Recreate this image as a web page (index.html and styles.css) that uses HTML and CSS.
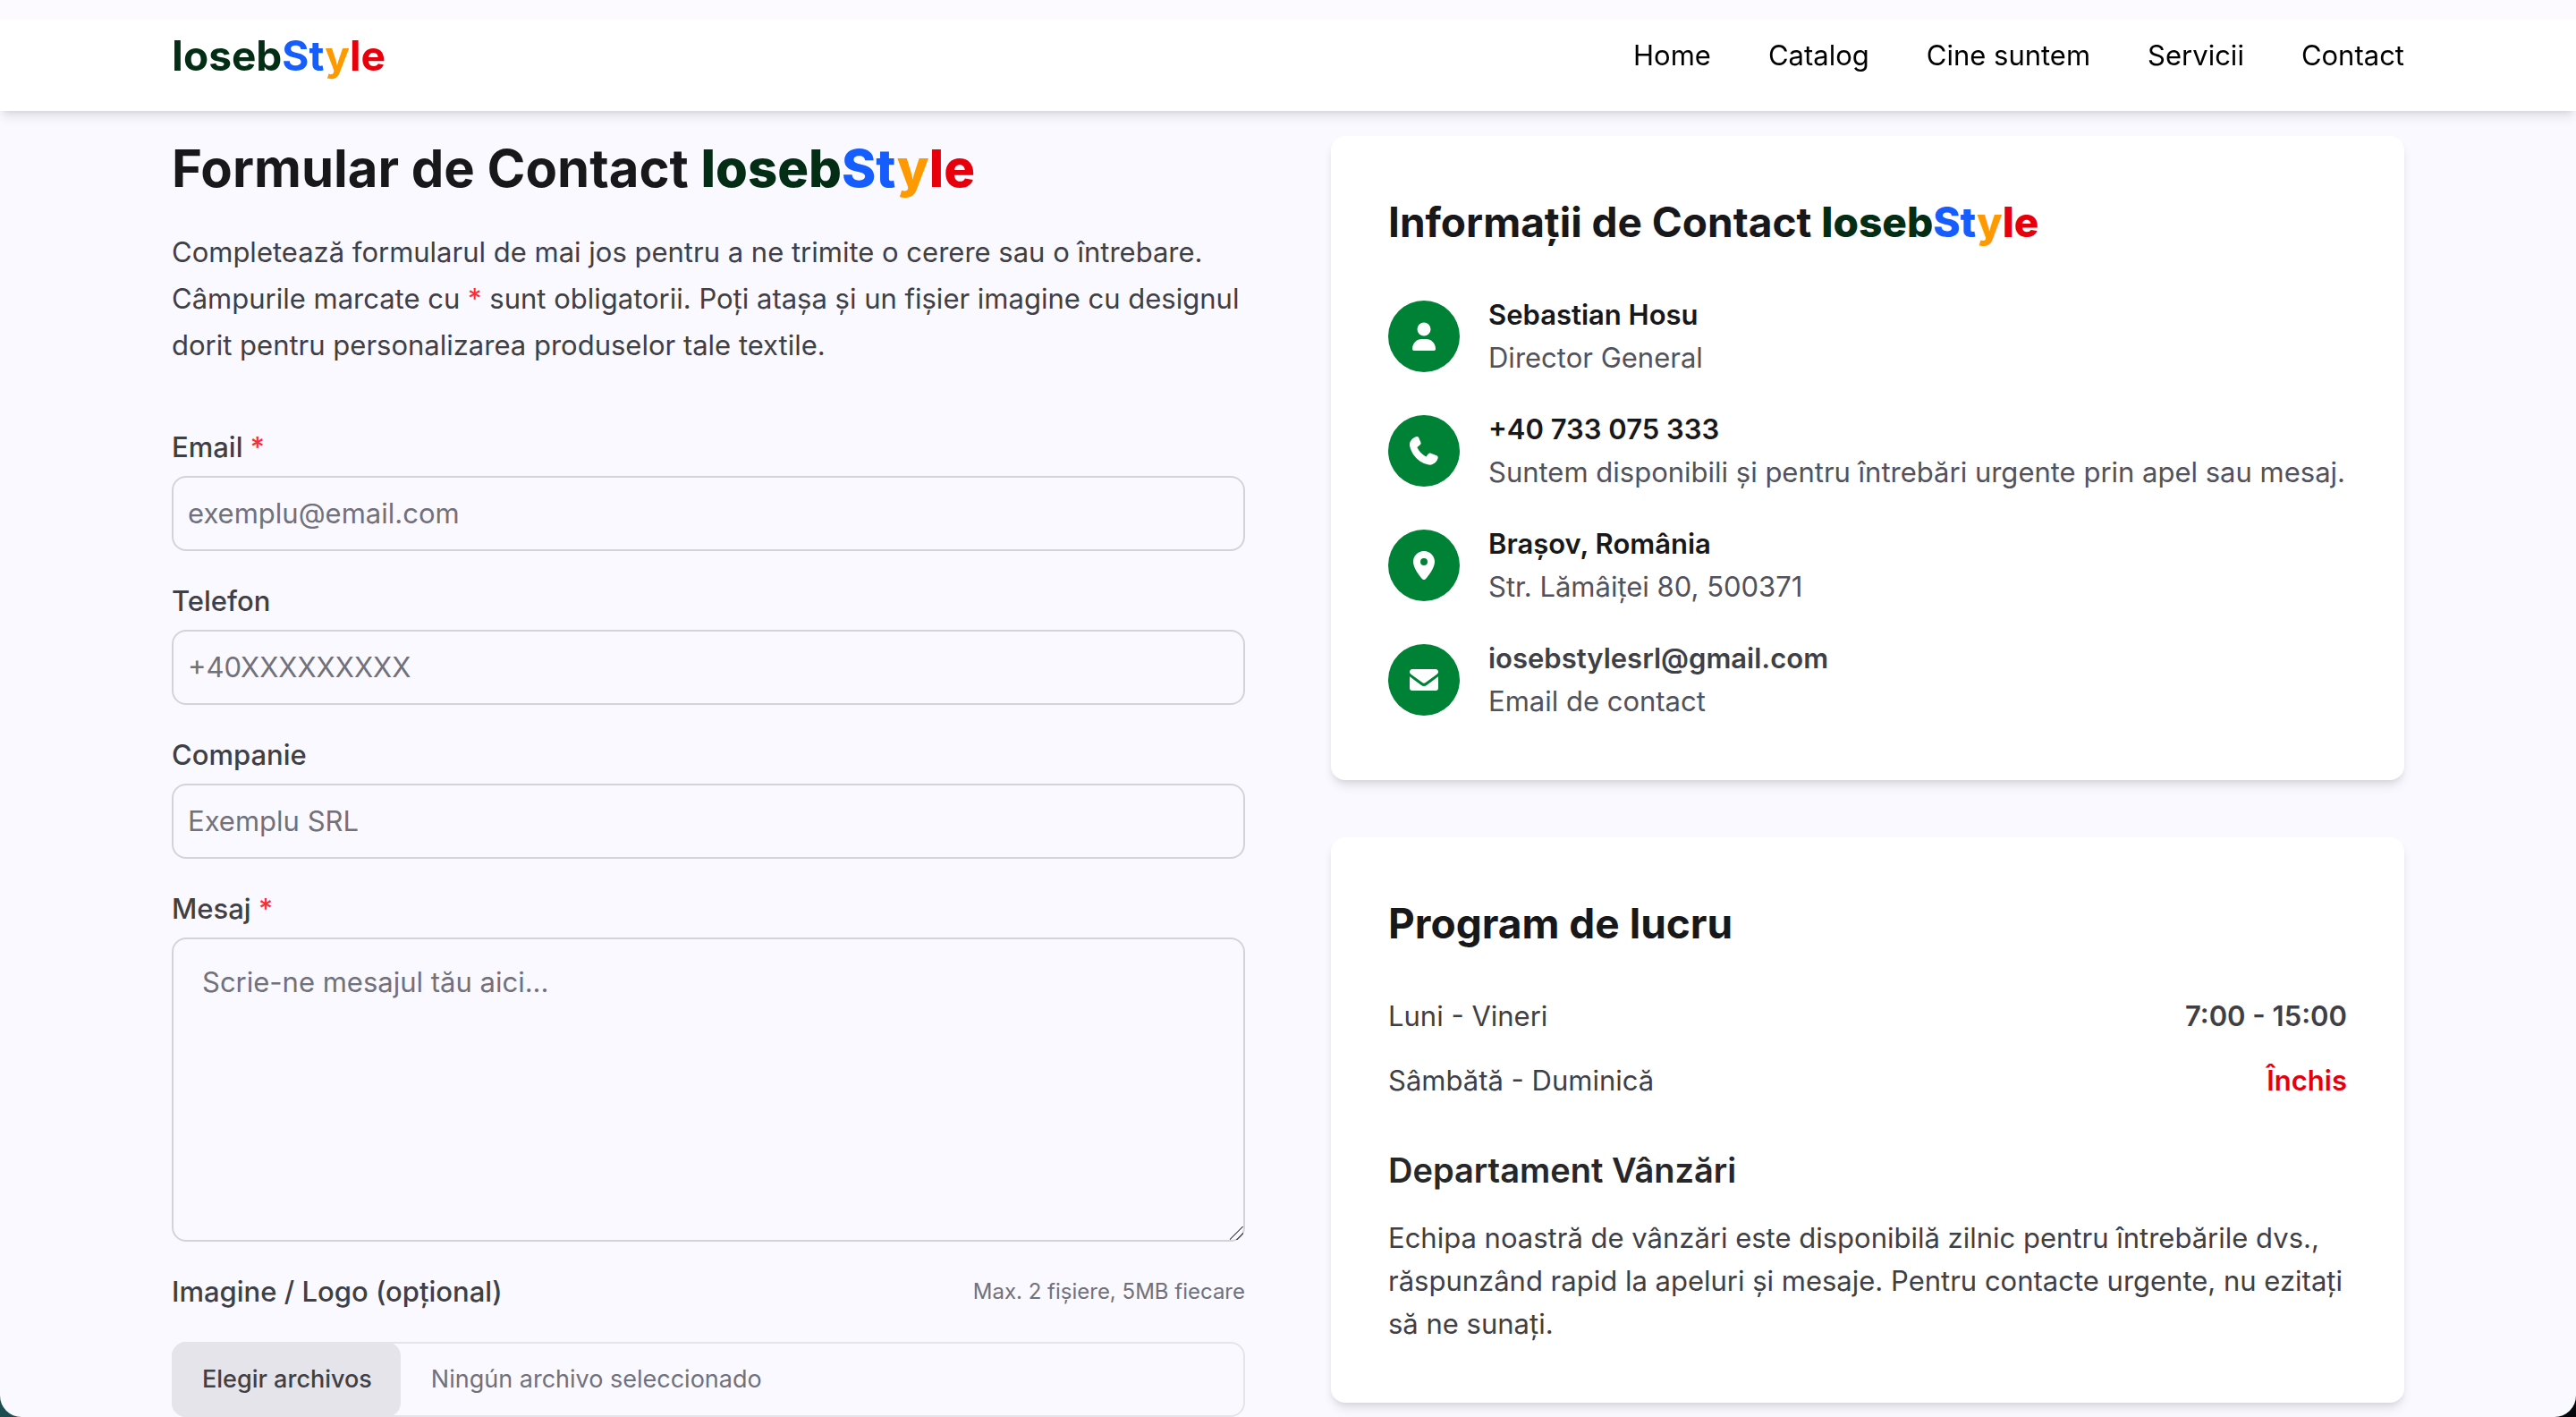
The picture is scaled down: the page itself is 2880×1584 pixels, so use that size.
FILE: index.html
```html
<!doctype html>
<html lang="ro">
<head>
    <meta charset="UTF-8">
    <meta name="viewport" content="width=device-width, initial-scale=1.0">
    <title>Contact - IosebStyle</title>
    <link rel="stylesheet" href="styles.css">
</head>
<body>

<div class="page">
    <header class="header">
        <div class="wrap header-row">
            <a href="#" class="brand logo">Ioseb<span class="blue">St</span><span class="amber">y</span><span class="red">le</span></a>
            <nav class="nav">
                <a href="#">Home</a>
                <a href="#">Catalog</a>
                <a href="#">Cine suntem</a>
                <a href="#">Servicii</a>
                <a href="#">Contact</a>
            </nav>
        </div>
    </header>

    <main class="wrap content">
        <section>
            <h1>Formular de Contact <span class="brand">Ioseb<span class="blue">St</span><span class="amber">y</span><span class="red">le</span></span></h1>
            <p class="intro">Completează formularul de mai jos pentru a ne trimite o cerere sau o întrebare. Câmpurile marcate cu <span class="req">*</span> sunt obligatorii. Poți atașa și un fișier imagine cu designul dorit pentru personalizarea produselor tale textile.</p>

            <form class="form">
                <div class="field">
                    <label for="email">Email <span class="req">*</span></label>
                    <input type="email" id="email" placeholder="exemplu@email.com" required>
                </div>
                <div class="field">
                    <label for="phone">Telefon</label>
                    <input type="tel" id="phone" placeholder="+40XXXXXXXXX">
                </div>
                <div class="field">
                    <label for="company">Companie</label>
                    <input type="text" id="company" placeholder="Exemplu SRL">
                </div>
                <div class="field">
                    <label for="message">Mesaj <span class="req">*</span></label>
                    <textarea id="message" rows="6" placeholder="Scrie-ne mesajul tău aici..." required></textarea>
                </div>
                <div class="upload">
                    <div class="upload-head">
                        <label for="files">Imagine / Logo (opțional)</label>
                        <small>Max. 2 fișiere, 5MB fiecare</small>
                    </div>
                    <input type="file" id="files" class="file-input" accept="image/*" multiple>
                    <label for="files" class="file-box">
                        <span class="file-btn">Elegir archivos</span>
                        <span class="file-name">Ningún archivo seleccionado</span>
                    </label>
                </div>
            </form>
        </section>

        <aside class="side">
            <section class="card">
                <h2>Informații de Contact <span class="brand">Ioseb<span class="blue">St</span><span class="amber">y</span><span class="red">le</span></span></h2>
                <ul class="contacts">
                    <li>
                        <span class="icon">
                            <svg viewBox="0 0 32 32"><circle cx="16" cy="8" r="7.5"/><path d="M3 30c0-6.200 4.800-11 11-11h4c6.200 0 11 4.800 11 11 0 1.200-.8 2-2 2H5c-1.200 0-2-.8-2-2z"/></svg>
                        </span>
                        <div>
                            <strong>Sebastian Hosu</strong>
                            <p>Director General</p>
                        </div>
                    </li>
                    <li>
                        <span class="icon">
                            <svg viewBox="4 4 484 484"><path d="M160.200 25.400c-7.200-17.300-26.200-26-44-20.200l-5.500 1.800C46.100 28.600-9.100 92.900 5.700 163c33.700 159.200 159 284.500 318.200 318.200 70.100 14.900 134.400-40.300 156-105l1.800-5.500c5.800-17.800-2.900-36.800-20.200-44l-97.300-40.500c-15.200-6.300-32.700-1.900-43.200 10.700L282.400 343.600C215.300 310.300 161.500 254.700 130.700 186l50.200-41c12.600-10.500 17-28 10.700-43.200z"/></svg>
                        </span>
                        <div>
                            <strong>+40 733 075 333</strong>
                            <p>Suntem disponibili și pentru întrebări urgente prin apel sau mesaj.</p>
                        </div>
                    </li>
                    <li>
                        <span class="icon">
                            <svg viewBox="0 0 32 32"><path fill-rule="evenodd" d="M16 0C9.400 0 4 5.300 4 11.800c0 6.900 6.700 15.800 10.200 19.500 1 1 2.600 1 3.600 0C21.300 27.600 28 18.700 28 11.800 28 5.300 22.600 0 16 0zm0 16a4 4 0 1 1 0-8 4 4 0 0 1 0 8z"/></svg>
                        </span>
                        <div>
                            <strong>Brașov, România</strong>
                            <p>Str. Lămâiței 80, 500371</p>
                        </div>
                    </li>
                    <li>
                        <span class="icon">
                            <svg viewBox="0 0 32 32"><path d="M3 4h26a3 3 0 0 1 1.800 5.400L17.800 19.100a3 3 0 0 1-3.600 0L1.200 9.400A3 3 0 0 1 3 4z"/><path d="M0 12.200V25a3 3 0 0 0 3 3h26a3 3 0 0 0 3-3V12.200L19.300 21.800a5.500 5.500 0 0 1-6.600 0z"/></svg>
                        </span>
                        <div>
                            <a href="mailto:iosebstylesrl@gmail.com">iosebstylesrl@gmail.com</a>
                            <p>Email de contact</p>
                        </div>
                    </li>
                </ul>
            </section>

            <section class="card">
                <h2>Program de lucru</h2>
                <dl class="hours">
                    <div>
                        <dt>Luni - Vineri</dt>
                        <dd>7:00 - 15:00</dd>
                    </div>
                    <div>
                        <dt>Sâmbătă - Duminică</dt>
                        <dd class="closed">Închis</dd>
                    </div>
                </dl>
                <h3>Departament Vânzări</h3>
                <p>Echipa noastră de vânzări este disponibilă zilnic pentru întrebările dvs., răspunzând rapid la apeluri și mesaje. Pentru contacte urgente, nu ezitați să ne sunați.</p>
            </section>
        </aside>
    </main>
</div>

</body>
</html>
```
FILE: styles.css
```css
*{
    box-sizing: border-box;
}
html{
    background: linear-gradient(to right, #1d4d50 50%, #05060c 50%);
}
body,h1,h2,h3,p,ul,dl,dd{
    margin: 0;
    padding: 0;
}
body{
    font-family: Inter, "Noto Sans", sans-serif;
    font-size: 31px;
    line-height: 48px;
    color: #3f3f46;
}
a{
    color: inherit;
    text-decoration: none;
}
.page{
    height: 100vh;
    overflow-y: auto;
    scrollbar-width: none;
    background-color: #faf9ff;
    border-radius: 0 0 24px 24px;
}
.wrap{
    padding-left: 192px;
    padding-right: 192px;
}

/* header */
.header{
    position: sticky;
    top: 0;
    z-index: 1;
    background: linear-gradient(#fcfaff 22px, #fff 22px);
    box-shadow: 0 8px 12px -2px rgba(0,0,0,.1), 0 4px 8px -4px rgba(0,0,0,.1);
}
.header-row{
    display: flex;
    align-items: center;
    justify-content: space-between;
    height: 124px;
}
.nav{
    display: flex;
    gap: 64px;
    color: #000;
}
.brand{
    font-weight: 800;
    color: #032e15;
}
.logo{
    font-size: 46px;
    font-weight: 700;
}
.blue{
    color: #155dfc;
}
.amber{
    color: #fe9a00;
}
.red{
    color: #e7000b;
}

.content{
    display: grid;
    grid-template-columns: 1fr 1fr;
    gap: 96px;
    align-items: start;
    padding-top: 28px;
    padding-bottom: 96px;
}
h1{
    font-size: 58px;
    line-height: 72px;
    font-weight: 700;
    color: #18181b;
}
.intro{
    margin-top: 32px;
    line-height: 52px;
}
.req{
    color: #fb2c36;
}

/* form */
.form{
    display: flex;
    flex-direction: column;
    gap: 32px;
    margin-top: 64px;
}
.field{
    display: flex;
    flex-direction: column;
    gap: 8px;
}
.field label,
.upload-head label{
    font-weight: 500;
}
input,textarea{
    width: 100%;
    font: inherit;
    color: inherit;
    background: transparent;
    border: 2px solid #d4d4d8;
    border-radius: 16px;
    outline: none;
}
input{
    padding: 16px;
}
textarea{
    display: block;
    padding: 24px 32px;
    resize: vertical;
}
textarea::-webkit-scrollbar{
    width: 20px;
    height: 20px;
}
/* two diagonal grip lines */
textarea::-webkit-resizer{
    background: linear-gradient(135deg, transparent 46%, #52525c 47%, #52525c 52%, transparent 53%, transparent 71%, #52525c 72%, #52525c 77%, transparent 78%);
}
::placeholder{
    color: #71717b;
}
.upload{
    display: flex;
    flex-direction: column;
    gap: 32px;
    position: relative;
}
.upload-head{
    display: flex;
    align-items: center;
    justify-content: space-between;
}
small{
    font-size: 24px;
    color: #71717b;
}
.file-input{
    position: absolute;
    width: 1px;
    height: 1px;
    padding: 0;
    opacity: 0;
}
.file-box{
    display: flex;
    border: 2px solid #e6e4eb;
    border-radius: 16px;
    font-size: 27px;
    cursor: pointer;
}
.file-btn{
    margin: -2px;
    padding: 18px 32px 18px 34px;
    border-radius: 16px;
    background-color: #e6e4eb;
    font-weight: 500;
}
.file-name{
    padding: 16px 36px;
    color: #71717b;
}

/* cards */
.side{
    display: grid;
    gap: 64px;
}
.card{
    padding: 64px;
    border-radius: 16px;
    background-color: #fff;
    box-shadow: 0 8px 12px -2px rgba(0,0,0,.1), 0 4px 8px -4px rgba(0,0,0,.1);
}
h2{
    margin-bottom: 48px;
    font-size: 46px;
    line-height: 64px;
    font-weight: 700;
    color: #18181b;
}
h3{
    margin: 48px 0 24px;
    font-size: 38px;
    line-height: 56px;
    font-weight: 600;
    color: #27272a;
}
.contacts{
    display: grid;
    gap: 32px;
    list-style: none;
}
.contacts li{
    display: flex;
    align-items: center;
    gap: 32px;
}
.contacts strong{
    font-weight: 600;
    color: #18181b;
}
.contacts a{
    font-weight: 600;
}
.contacts p{
    color: #52525c;
}
.icon{
    display: flex;
    flex: none;
    align-items: center;
    justify-content: center;
    width: 80px;
    height: 80px;
    border-radius: 50%;
    background-color: #008236;
}
.icon svg{
    width: 32px;
    height: 32px;
    fill: #fff;
}
.hours{
    display: grid;
    gap: 24px;
}
.hours div{
    display: flex;
    justify-content: space-between;
}
.hours dd{
    font-weight: 600;
}
.hours .closed{
    color: #e7000b;
}
```
